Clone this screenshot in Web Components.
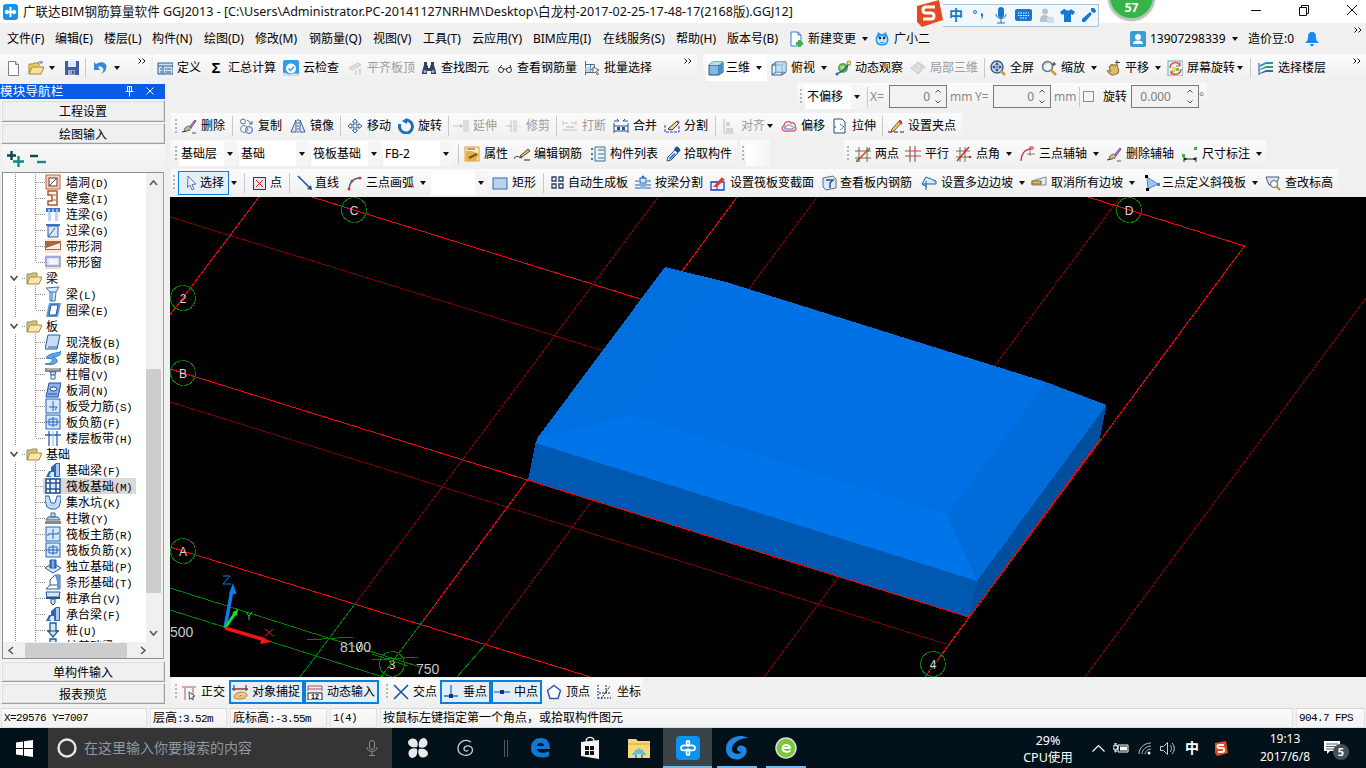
<!DOCTYPE html>
<html lang="zh">
<head>
<meta charset="utf-8">
<title>GGJ2013</title>
<style>
  html, body { margin: 0; padding: 0; background: #f0f0f0; overflow: hidden; }
  body { font: 12px/16px "Noto Sans", "Noto Sans CJK SC", sans-serif; color: #000; }
</style>
</head>
<body>
<gld-app>
  <gld-titlebar>广联达BIM钢筋算量软件 GGJ2013 - [C:\Users\Administrator.PC-20141127NRHM\Desktop\白龙村-2017-02-25-17-48-17(2168版).GGJ12]</gld-titlebar>

  <gld-row h="31" style="padding-left:7px">
    <gld-tool w="48">文件(F)</gld-tool><gld-tool w="49">编辑(E)</gld-tool><gld-tool w="48">楼层(L)</gld-tool><gld-tool w="52">构件(N)</gld-tool>
    <gld-tool w="51">绘图(D)</gld-tool><gld-tool w="54">修改(M)</gld-tool><gld-tool w="64">钢筋量(Q)</gld-tool><gld-tool w="50">视图(V)</gld-tool>
    <gld-tool w="49">工具(T)</gld-tool><gld-tool w="61">云应用(Y)</gld-tool><gld-tool w="70">BIM应用(I)</gld-tool><gld-tool w="73">在线服务(S)</gld-tool>
    <gld-tool w="51">帮助(H)</gld-tool><gld-tool w="61">版本号(B)</gld-tool>
    <gld-tool w="86" icon="change" arrow>新建变更</gld-tool>
    <gld-tool w="256" icon="robot">广小二</gld-tool>
    <gld-tool w="118" icon="user" arrow>13907298339</gld-tool>
    <gld-tool w="56">造价豆:0</gld-tool>
    <gld-tool w="50" icon="bell"></gld-tool>
    <gld-more></gld-more>
  </gld-row>

  <gld-row h="29">
    <gld-bar w="151" h="27" style="padding-left:5px;align-self:flex-start">
      <gld-tool w="23" icon="new"></gld-tool><gld-tool w="36" icon="open" arrow="5"></gld-tool><gld-tool w="21" icon="save"></gld-tool>
      <gld-sep r="7"></gld-sep><gld-tool w="40" icon="undo" arrow="5"></gld-tool><gld-more></gld-more>
    </gld-bar>
    <gld-bar w="544" h="27" style="padding-left:4px;margin-left:2px;align-self:flex-start">
      <gld-tool w="51" icon="define">定义</gld-tool><gld-tool w="75" icon="sigma">汇总计算</gld-tool><gld-tool w="64" icon="cloudcheck">云检查</gld-tool>
      <gld-tool w="74" icon="flush" off>平齐板顶</gld-tool><gld-tool w="76" icon="binoc">查找图元</gld-tool><gld-tool w="87" icon="glasses">查看钢筋量</gld-tool>
      <gld-tool icon="batch">批量选择</gld-tool><gld-more></gld-more>
    </gld-bar>
    <gld-bar w="663" h="27" style="padding-left:5px;margin-left:6px;align-self:flex-start">
      <gld-tool w="59" icon="cube" g="2" arrow style="background:#fff;box-shadow:-2px 0 #fff;margin-right:4px">三维</gld-tool>
      <gld-tool w="64" icon="glasscube" arrow>俯视</gld-tool><gld-tool w="75" icon="orbit">动态观察</gld-tool><gld-tool w="74" icon="part3d" off>局部三维</gld-tool>
      <gld-sep r="5"></gld-sep><gld-tool w="51" icon="fit">全屏</gld-tool><gld-tool w="64" icon="zoom" arrow>缩放</gld-tool><gld-tool w="62" icon="pan" arrow>平移</gld-tool>
      <gld-tool w="83" icon="screenrot" arrow="2">屏幕旋转</gld-tool><gld-sep r="7"></gld-sep><gld-tool icon="floors">选择楼层</gld-tool><gld-more></gld-more>
    </gld-bar>
  </gld-row>

  <gld-main>
    <gld-nav>
      <gld-tree-item icon="wallhole" key="D">墙洞</gld-tree-item>
      <gld-tree-item icon="niche" key="I">壁龛</gld-tree-item>
      <gld-tree-item icon="coupling" key="G">连梁</gld-tree-item>
      <gld-tree-item icon="lintel" key="G">过梁</gld-tree-item>
      <gld-tree-item icon="bandhole">带形洞</gld-tree-item>
      <gld-tree-item icon="bandwin" last>带形窗</gld-tree-item>
      <gld-tree-item group>梁</gld-tree-item>
      <gld-tree-item icon="beam" key="L">梁</gld-tree-item>
      <gld-tree-item icon="ring" key="E" last>圈梁</gld-tree-item>
      <gld-tree-item group>板</gld-tree-item>
      <gld-tree-item icon="slab" key="B">现浇板</gld-tree-item>
      <gld-tree-item icon="spiral" key="B">螺旋板</gld-tree-item>
      <gld-tree-item icon="capital" key="V">柱帽</gld-tree-item>
      <gld-tree-item icon="slabhole" key="N">板洞</gld-tree-item>
      <gld-tree-item icon="slabbar" key="S">板受力筋</gld-tree-item>
      <gld-tree-item icon="negbar" key="F">板负筋</gld-tree-item>
      <gld-tree-item icon="floorband" key="H" last>楼层板带</gld-tree-item>
      <gld-tree-item group>基础</gld-tree-item>
      <gld-tree-item icon="fbeam" key="F">基础梁</gld-tree-item>
      <gld-tree-item icon="raft" key="M" selected>筏板基础</gld-tree-item>
      <gld-tree-item icon="pit" key="K">集水坑</gld-tree-item>
      <gld-tree-item icon="pier" key="Y">柱墩</gld-tree-item>
      <gld-tree-item icon="mainbar" key="R">筏板主筋</gld-tree-item>
      <gld-tree-item icon="negbar" key="X">筏板负筋</gld-tree-item>
      <gld-tree-item icon="isolated" key="P">独立基础</gld-tree-item>
      <gld-tree-item icon="strip" key="T">条形基础</gld-tree-item>
      <gld-tree-item icon="pilecap" key="V">桩承台</gld-tree-item>
      <gld-tree-item icon="fbeam" key="F">承台梁</gld-tree-item>
      <gld-tree-item icon="pile" key="U">桩</gld-tree-item>
      <gld-tree-item icon="pile" key="T">桩基础梁</gld-tree-item>
    </gld-nav>

    <gld-workspace>
      <gld-row h="27" style="margin-bottom:3px">
        <gld-bar w="410" style="padding-left:3px;margin-left:627px">
          <gld-grip w="5"></gld-grip><gld-combo w="58">不偏移</gld-combo><gld-sep l="4" r="2"></gld-sep>
          <gld-tool w="19" muted>X=</gld-tool><gld-spin w="58">0</gld-spin><gld-tool w="28" muted>&nbsp;mm</gld-tool>
          <gld-tool w="18" muted>Y=</gld-tool><gld-spin w="58">0</gld-spin><gld-tool w="28" muted>&nbsp;mm</gld-tool>
          <gld-sep r="3"></gld-sep><gld-check></gld-check>
          <gld-tool w="28" style="margin-left:9px">旋转</gld-tool><gld-spin w="68" pad="27">0.000</gld-spin><gld-tool w="9" muted>°</gld-tool>
        </gld-bar>
      </gld-row>

      <gld-row h="26" style="margin-bottom:1px">
        <gld-bar w="791" style="padding-left:4px;margin-left:1px">
          <gld-grip w="6"></gld-grip>
          <gld-tool w="51" icon="brush">删除</gld-tool><gld-sep r="5"></gld-sep><gld-tool w="52" icon="copy">复制</gld-tool><gld-tool w="50" icon="mirror">镜像</gld-tool>
          <gld-sep r="6"></gld-sep><gld-tool w="51" icon="move">移动</gld-tool><gld-tool w="50" icon="rotate">旋转</gld-tool><gld-sep r="4"></gld-sep>
          <gld-tool w="53" icon="extend" off>延伸</gld-tool><gld-tool w="50" icon="trim" off>修剪</gld-tool><gld-sep r="5"></gld-sep>
          <gld-tool w="51" icon="breakline" off>打断</gld-tool><gld-tool w="51" icon="merge">合并</gld-tool><gld-tool w="51" icon="split">分割</gld-tool>
          <gld-sep r="5"></gld-sep><gld-tool w="60" icon="align" off arrow="2">对齐</gld-tool><gld-tool w="51" icon="offset">偏移</gld-tool><gld-tool w="50" icon="stretch">拉伸</gld-tool>
          <gld-sep r="5"></gld-sep><gld-tool icon="grips">设置夹点</gld-tool>
        </gld-bar>
      </gld-row>

      <gld-row h="27" style="margin-bottom:2px">
        <gld-bar w="566" style="padding-left:4px;margin-left:1px">
          <gld-grip w="4"></gld-grip><gld-combo w="57" style="margin-right:3px">基础层</gld-combo><gld-combo w="69" style="margin-right:3px">基础</gld-combo>
          <gld-combo w="69" style="margin-right:3px">筏板基础</gld-combo><gld-combo w="69">FB-2</gld-combo><gld-sep l="6" r="5"></gld-sep>
          <gld-tool w="50" icon="props">属性</gld-tool><gld-tool w="76" icon="editbar">编辑钢筋</gld-tool><gld-tool w="76" icon="list">构件列表</gld-tool><gld-tool icon="pick" g="2">拾取构件</gld-tool>
        </gld-bar>
        <gld-bar w="30" style="padding-left:2px;margin-left:3px"><gld-grip w="4"></gld-grip><gld-combo w="24" bare></gld-combo></gld-bar>
        <gld-bar w="422" style="padding-left:3px;margin-left:74px">
          <gld-grip w="8"></gld-grip>
          <gld-tool w="50" icon="twopt">两点</gld-tool><gld-tool w="51" icon="parallel">平行</gld-tool><gld-tool w="63" icon="angle" arrow>点角</gld-tool>
          <gld-tool w="87" icon="arcaxis" arrow>三点辅轴</gld-tool><gld-tool w="76" icon="brush">删除辅轴</gld-tool><gld-tool icon="dim" arrow>尺寸标注</gld-tool>
        </gld-bar>
      </gld-row>

      <gld-row h="27" style="margin-bottom:1px">
        <gld-bar w="1167" style="padding-left:2px;margin-left:1px">
          <gld-grip w="5"></gld-grip>
          <gld-tool w="51" icon="cursor" pad="6" g="0" on="thin">选择</gld-tool><gld-tool w="15" arrow="2"></gld-tool><gld-sep r="7"></gld-sep>
          <gld-tool w="37" icon="point" g="2">点</gld-tool><gld-sep r="7"></gld-sep><gld-tool w="50" icon="line" g="2">直线</gld-tool>
          <gld-tool w="84" icon="arc" g="3" arrow>三点画弧</gld-tool><gld-combo w="56" style="margin-right:5px"></gld-combo>
          <gld-tool w="51" icon="rect">矩形</gld-tool><gld-sep r="6"></gld-sep><gld-tool w="85" icon="autogen" g="2">自动生成板</gld-tool>
          <gld-tool w="75" icon="splitbeam">按梁分割</gld-tool><gld-tool w="111" icon="section">设置筏板变截面</gld-tool><gld-tool w="100" icon="viewbar" g="3">查看板内钢筋</gld-tool>
          <gld-tool w="110" icon="slope" arrow>设置多边边坡</gld-tool><gld-tool w="113" icon="noslope" arrow>取消所有边坡</gld-tool><gld-tool w="121" icon="tri" g="2" arrow>三点定义斜筏板</gld-tool><gld-tool icon="elev" g="4">查改标高</gld-tool>
        </gld-bar>
      </gld-row>

      <gld-canvas></gld-canvas>

      <gld-row h="30">
        <gld-bar w="208" h="27" style="padding-left:4px;margin-left:1px;align-self:flex-start;margin-top:1px">
          <gld-grip w="6"></gld-grip><gld-tool w="48" icon="ortho">正交</gld-tool>
          <gld-tool w="75" icon="snap" pad="3" on>对象捕捉</gld-tool><gld-tool w="75" icon="dyn" pad="3" on>动态输入</gld-tool>
        </gld-bar>
        <gld-bar w="261" h="27" style="padding-left:4px;margin-left:3px;align-self:flex-start;margin-top:1px">
          <gld-grip w="7"></gld-grip><gld-tool w="47" icon="cross">交点</gld-tool>
          <gld-tool w="51" icon="perp" pad="3" on>垂点</gld-tool><gld-tool w="51" icon="mid" pad="3" on>中点</gld-tool>
          <gld-tool w="54" icon="vertex" pad="4">顶点</gld-tool><gld-tool icon="coord" g="5">坐标</gld-tool>
        </gld-bar>
      </gld-row>
    </gld-workspace>
  </gld-main>

  <gld-statusbar>
    <gld-cell w="146" mono>X=29576 Y=7007</gld-cell>
    <gld-cell w="77" mono><b>层高</b>:3.52m</gld-cell>
    <gld-cell w="97" mono><b>底标高</b>:-3.55m</gld-cell>
    <gld-cell w="47" mono>1(4)</gld-cell>
    <gld-cell w="913">按鼠标左键指定第一个角点，或拾取构件图元</gld-cell>
    <gld-cell w="69" mono>904.7 FPS</gld-cell>
  </gld-statusbar>

  <gld-taskbar></gld-taskbar>
  <gld-sogou></gld-sogou>
  <gld-score>57</gld-score>
</gld-app>

<script>
const ICONS = {
  change: '<path d="M3 1h7l3 3v11H3z" fill="#fff" stroke="#2d7fd1"/><path d="M10 1v3h3" fill="none" stroke="#2d7fd1"/><path d="M10 9h3v2h2v3h-2v2h-3v-2H8v-3h2z" fill="#46b04a"/>',
  robot: '<path d="M3 4l1-3 3 2h2l3-2 1 3c2 3 2 6 0 9-2 2-8 2-10 0-2-3-2-6 0-9z" fill="#2e9be8"/><ellipse cx="8" cy="9" rx="5" ry="4" fill="#bfe6fb"/><circle cx="6" cy="7" r="1.2" fill="#123"/><circle cx="10" cy="7" r="1.2" fill="#123"/><path d="M6 11c1 1 3 1 4 0" stroke="#2e9be8" fill="none"/>',
  user: '<rect width="16" height="16" rx="2" fill="#3d9bd4"/><circle cx="8" cy="6" r="3" fill="#fff"/><path d="M3 13c0-3 3-3.500 5-3.500s5 .5 5 3.500z" fill="#fff"/>',
  bell: '<path d="M8 1c3 0 4 2 4 5 0 3 1 4 3 6H1c2-2 3-3 3-6 0-3 1-5 4-5z" fill="#1a8af0"/><path d="M6 13h4c0 3-4 3-4 0z" fill="#1a8af0"/>',
  new: '<path d="M3.500 1.500h7l3 3v11h-10z" fill="#fff" stroke="#7f7f7f"/><path d="M10.500 1.500v3h3" fill="#ddd" stroke="#7f7f7f"/>',
  open: '<path d="M1 14V4h4l1-1h5v3" fill="#eecb6a" stroke="#a8842c"/><path d="M1 14l3-7h12l-3 7z" fill="#f8e0a0" stroke="#a8842c"/><path d="M10 3c1-2 3-2 4 0M14 3l-2 0M14 3l0-2" stroke="#2c7ed6" fill="none"/>',
  save: '<path d="M1 1h14v14H1z" fill="#3c5ea6"/><path d="M4 1h8v6H4z" fill="#e2e9f6"/><path d="M4 10h7v5H4z" fill="#9aa9cc"/><path d="M8 11h2v3H8z" fill="#3c5ea6"/>',
  undo: '<path d="M5 3C10 1 15 4 13 9c-1 3-3 4-5 5 2-2 3-4 2-6-1-1-3-2-5-1l2 3H1V2l2 2z" fill="#3a86d8"/>',
  define: '<rect x="1" y="3" width="15" height="11" fill="#cfe2f5" stroke="#2a5c94"/><path d="M1 6h15M6 6v8M3 9h2M3 12h2M8 9h6M8 12h6" stroke="#2a5c94"/>',
  sigma: '<text x="8" y="13" font-family="Liberation Sans" font-weight="700" font-size="15" text-anchor="middle" fill="#000">Σ</text>',
  cloudcheck: '<rect width="16" height="16" rx="2" fill="#2f9ee6"/><circle cx="8" cy="8.500" r="5" fill="#fff"/><path d="M5.500 8.500l2 2 3.500-4" fill="none" stroke="#2f9ee6" stroke-width="1.500"/><path d="M0 13c3-1 5 2 8 1s5-1 8 0v2H0z" fill="#bfe3f9"/>',
  flush: '<path d="M2 8l9-5 3 2-9 5z" fill="#e1e1e1" stroke="#c8c8c8"/><path d="M2 9v6h6V11l6-3v7H2z" fill="#d4d4d4"/><path d="M6 12h2v3H6zM10 10h2v5h-2z" fill="#f3f3f3"/>',
  binoc: '<path d="M3 2h3v3l1 1v2h2V6l1-1V2h3v3l2 7v2H10v-3H6v3H1v-2l2-7z" fill="#33405c"/><circle cx="4" cy="11.500" r="1.500" fill="#9cb6dc"/><circle cx="12" cy="11.500" r="1.500" fill="#9cb6dc"/>',
  glasses: '<circle cx="4" cy="10" r="2.500" fill="#fff" stroke="#333"/><circle cx="12" cy="10" r="2.500" fill="#fff" stroke="#333"/><path d="M6 9h4M2 8l3-3M14 8l-1-3" stroke="#333" fill="none"/>',
  batch: '<path d="M1.500 1v14M1.500 4.500h9v5h-9M1.500 12.500h10M6.500 4.500v8" stroke="#456a8c" fill="none"/><path d="M1.500 7h5v5h-5z" fill="#b8d4ee"/><path d="M9 7l6 3-2.500 1 2 3-1 1-2-3L9 13z" fill="#fff" stroke="#666"/>',
  cube: '<path d="M1 5l4-3h10v10l-4 3H1z" fill="#7fb9e2" stroke="#234f74"/><path d="M1 5h10v10M11 5l4-3" fill="none" stroke="#234f74"/><path d="M1 5l4-3h10l-4 3z" fill="#b9def5"/><path d="M11 5l4-3v10l-4 3z" fill="#4a8fc6"/>',
  glasscube: '<path d="M1 5l4-3h10v10l-4 3H1z" fill="#e3f1fb" stroke="#2c5f89"/><path d="M1 5h10v10M11 5l4-3M1 15l4-3h10M5 2v10" fill="none" stroke="#2c5f89"/><path d="M5 2h10v10H5z" fill="#b6d6ef" fill-opacity=".7"/>',
  orbit: '<circle cx="8" cy="8" r="5" fill="#58ae44"/><path d="M5 6l4-1 1 3-4 3z" fill="#a8dd8a"/><path d="M1 14C5 13 11 9 15 2" stroke="#2c4fae" stroke-width="1.500" fill="none"/><circle cx="14" cy="3" r="2" fill="#f6e27a" stroke="#9a8a2a"/><circle cx="2" cy="14" r="1.500" fill="#3a63c8"/>',
  part3d: '<path d="M1 8l7-6 7 5-7 7z" fill="#e4e4e4" stroke="#c4c4c4"/><path d="M4 5l7 5M7 3l7 5M8 2L4 11M12 5l-4 8" stroke="#cfcfcf"/>',
  fit: '<circle cx="7" cy="7" r="6" fill="#cfe0f4" stroke="#3a5c8c" stroke-width="1.500"/><path d="M7 3v8M3 7h8M7 2.500l-1.500 2h3zM7 11.500l-1.500-2h3zM2.500 7l2-1.500v3zM11.500 7l-2-1.500v3z" fill="#24497e" stroke="#24497e" stroke-width=".6"/><path d="M11 11l4 4" stroke="#d19a31" stroke-width="2.500"/>',
  zoom: '<circle cx="6.500" cy="6.500" r="5" fill="#eef4fa" stroke="#5a7489" stroke-width="1.500"/><path d="M3.500 5c1-2 3-2 4-2" stroke="#aac" fill="none"/><path d="M10 10l5 5" stroke="#c89c30" stroke-width="2.500"/><path d="M13 2v4M11 4h4" stroke="#333"/>',
  pan: '<path d="M2 9c1-1 2 0 3 1V6c0-1 2-1 2 0v-1c0-1 2-1 2 0v1c0-1 2-1 2 0v1c0-1 2-1 2 0v4c0 3-2 4-5 4-3 0-4-1-6-6z" transform="rotate(-20 8 9)" fill="#dfbb6e" stroke="#8f6d26"/><path d="M12 0v5M10 2.500h5" stroke="#444"/>',
  screenrot: '<rect x="1" y="1" width="15" height="15" fill="#e8f3fb" stroke="#6ea6cf"/><path d="M3 8a5.500 5.500 0 0 1 10-3M14 9a5.500 5.500 0 0 1-10 3" stroke="#e04c36" stroke-width="1.500" fill="none"/><path d="M13 2v4h-4M4 15v-4h4" fill="none" stroke="#e04c36"/><path d="M5 7h4v4H5z" fill="#f4d94f"/><path d="M9 8h3v3H9z" fill="#77c35a"/>',
  floors: '<path d="M2 5l6-3h7v2H8L2 7z" fill="#2c8cc9"/><path d="M2 9l6-3h7v2H8l-6 2z" fill="#2f9e6b"/><path d="M2 13l6-3h7v2H8l-6 2z" fill="#2c6cb8"/><path d="M1 3v12" stroke="#1d4b74"/>',
  brush: '<path d="M1 14l8-2" stroke="#222"/><path d="M3 12c1-3 3-4 5-4l2 2c0 2-3 3-6 3z" fill="#d9b26a" stroke="#5577aa"/><path d="M9 8l5-6 1 1-5 7z" fill="#c87ad0" stroke="#7a4a9a"/><path d="M11 15h4" stroke="#555"/>',
  copy: '<circle cx="5" cy="3.500" r="2.500" fill="none" stroke="#5a6a7a"/><circle cx="11" cy="12" r="3.500" fill="#d8eaf8" stroke="#3a6ea5"/><path d="M9 2l5 4M14 3v3h-3" fill="none" stroke="#3a6ea5"/><circle cx="6" cy="11" r="3.500" fill="none" stroke="#7a8a9a"/>',
  mirror: '<path d="M6 2L1 14h5z" fill="#dbe9f6" stroke="#34608e"/><path d="M10 2l5 12h-5z" fill="#dbe9f6" stroke="#34608e"/><path d="M8 1v14" stroke="#34608e" stroke-dasharray="2 1"/>',
  move: '<path d="M8 1l2.500 3H9v3h3V5.500L15 8l-3 2.500V9H9v3h1.500L8 15l-2.500-3H7V9H4v1.500L1 8l3-2.500V7h3V4H5.500z" fill="#fff" stroke="#2a5a96"/>',
  rotate: '<path d="M8 2a6.500 6.500 0 1 1-6 4" fill="none" stroke="#1f6fc2" stroke-width="3"/><path d="M9 0v6L4 3z" fill="#1f6fc2"/>',
  extend: '<path d="M0 8h9M13 2v12M15 2v12M11 2v12" stroke="#c4c4c4"/><path d="M7 5.500L10 8l-3 2.500z" fill="#c4c4c4"/>',
  trim: '<path d="M5 2v12M8 2v12M10 2v12M0 8h6" stroke="#c4c4c4"/><path d="M10 8h5" stroke="#dcdcdc"/>',
  breakline: '<path d="M1 5h5M9 5h5M1 12h14M1 3v4M14 3v4" stroke="#c4c4c4"/><path d="M4 8h8v2H4z" fill="#d6d6d6"/>',
  merge: '<path d="M1 8h14M1 13h14M1 5v10M15 5v10" stroke="#27508c"/><path d="M1 3h5M6 3L4 1M15 3h-5M10 3l2-2" stroke="#27508c"/><rect x="4" y="9" width="3" height="3" fill="#27508c"/><rect x="9" y="9" width="3" height="3" fill="#27508c"/>',
  split: '<path d="M1 7v7h14V7" stroke="#1144d0" stroke-dasharray="3 1" fill="none"/><path d="M4 11L13 3l2 2-7 7z" fill="#f4d9a0" stroke="#333"/><path d="M13 3l2 2" stroke="#c33" stroke-width="2"/>',
  align: '<path d="M3 1v14M3 15h10" stroke="#c0c0c0"/><path d="M5 4h4v4H5zM5 10h7v4H5z" fill="#d4d4d4"/>',
  offset: '<path d="M4 13C1 13 0 9 3 8 3 4 8 2 10 5c3-1 5 2 4 4 2 2 0 4-2 4z" fill="#fff" stroke="#e06060" stroke-width="1.500"/><path d="M4 11C3 10 3 9 5 9c0-2 4-3 5-1 2 0 3 1 2 3z" fill="#fff" stroke="#2f76bd"/>',
  stretch: '<path d="M2 1h8l3 3v11H2z" fill="#fff" stroke="#2a4a7c"/><path d="M8 6l4 3-4 3M2 9h3" stroke="#2a4a7c" fill="none" stroke-dasharray="2 1"/>',
  grips: '<path d="M0 14h4M6 14h4M12 14h4" stroke="#222"/><path d="M4 11l8-9 2 2-8 9-3 1z" fill="#f0c870" stroke="#7a5a20"/><path d="M11 3l3 3" stroke="#d04040" stroke-width="2"/>',
  props: '<rect x="1" y="1" width="14" height="14" fill="#fbeec2" stroke="#e09a38"/><path d="M2 5h6l7 3-3 7H2z" fill="#e2b14e"/><path d="M5 12l8-4" stroke="#7a5212" stroke-width="2"/><path d="M3 3h8" stroke="#7a5212"/>',
  editbar: '<path d="M0 13c1-3 4-3 5-2l3 1" stroke="#222" fill="none"/><path d="M6 10l8-7 2 2-8 6z" fill="#e2bd7a" stroke="#5a4a22"/><path d="M10 14h6" stroke="#222"/>',
  list: '<path d="M5 1h10v14H5z" fill="#eaf3fb" stroke="#3f6e96"/><path d="M8 4h6M8 8h6M8 12h6" stroke="#3f6e96"/><path d="M1 2h2v2H1zM1 7h2v2H1zM1 12h2v2H1z" fill="#5a7188"/>',
  pick: '<path d="M1 15l1-4 7-7 3 3-7 7z" fill="#e8f4fb" stroke="#2a5590"/><path d="M3 12l5-5 2 1-6 6z" fill="#2f83d2"/><path d="M8 3l2-2c1-1 2 0 3 1s2 2 1 3l-2 2z" fill="#1d4e8f"/>',
  twopt: '<path d="M4 1v15M12 1v15M0 5h16M0 12h16" stroke="#7a6a4a"/><path d="M1 16L15 2" stroke="#e02828" stroke-width="1.300"/><circle cx="3" cy="14" r="1.500" fill="#34a23c"/><circle cx="13" cy="4" r="1.500" fill="#34a23c"/>',
  parallel: '<path d="M5 0v16M10 0v16" stroke="#555"/><path d="M0 5h16M0 10h16" stroke="#d83a3a"/>',
  angle: '<path d="M4 1v15M9 1v15M0 5h14M0 11h14" stroke="#7a6a4a"/><path d="M1 15L13 1" stroke="#d81e1e" stroke-width="1.300"/><circle cx="14" cy="11" r="1.200" fill="#d81e1e"/>',
  arcaxis: '<path d="M2 15C2 8 6 3 12 3" fill="none" stroke="#d83a3a" stroke-width="1.300"/><path d="M8 8h8M11 0v10" stroke="#555" stroke-opacity=".7"/><circle cx="13" cy="2" r="1.300" fill="none" stroke="#d83a3a"/>',
  dim: '<path d="M2 11v5M14 11v5M2 13h12M2 13l2-1v2zM14 13l-2-1v2z" stroke="#222" fill="#222"/><rect x="0" y="8" width="3" height="3" fill="#45b04a"/><rect x="12" y="1" width="3" height="3" fill="#45b04a"/>',
  cursor: '<path d="M4 1l8 8-4 .5L10 14l-2 1-2-5-2.500 2.500z" fill="#eef3fa" stroke="#5577aa"/>',
  point: '<rect x="1.500" y="2.500" width="12" height="12" fill="#dfe9f6" stroke="#223c80"/><path d="M4 5l7 7M11 5l-7 7" stroke="#c8222c"/>',
  line: '<path d="M1 1l12 12" stroke="#1f4e8c" stroke-width="1.500"/><path d="M15 15l-5-1 4-4z" fill="#1f4e8c"/>',
  arc: '<path d="M2 15C2 8 6 3 13 3" fill="none" stroke="#2a5a9a" stroke-width="1.300"/><circle cx="2" cy="14" r="1.500" fill="#d83a3a"/><circle cx="5" cy="6" r="1.500" fill="#d83a3a"/><circle cx="13" cy="3" r="1.500" fill="#d83a3a"/>',
  rect: '<rect x="1" y="3" width="14" height="11" fill="#b8d2f0" stroke="#3a6ab4"/>',
  autogen: '<path d="M2 2h4v4H2zM9 2h4v4H9zM2 9h4v4H2zM9 9h4v4H9z" fill="#eef4fb" stroke="#2a3f6a" stroke-width="1.300"/>',
  splitbeam: '<path d="M0 6h4M12 6h4M0 10h16M0 13h16" stroke="#2060b8"/><rect x="5" y="3" width="6" height="5" fill="#d6e8f9" stroke="#2060b8"/><circle cx="8" cy="2" r="1.500" fill="#2a6cd0"/><path d="M5 11h6v3H5z" fill="#8fb8e8"/>',
  section: '<path d="M1 7h13v8H1z" fill="none" stroke="#1240c4" stroke-width="1.300"/><path d="M7 7v8" stroke="#1240c4"/><path d="M3 12L12 2l3 2-8 8z" fill="#e23a2c"/><path d="M12 2l3 2" stroke="#fff"/>',
  viewbar: '<path d="M2 3l10-2 3 3v9l-10 2-3-3z" fill="#dce9f6" stroke="#55708a"/><path d="M5 5h7l-3 3v5" stroke="#245a92" stroke-width="1.500" fill="none"/>',
  slope: '<path d="M5 15V6M1 9h14M1 9l4-7 10 4v3" fill="#d8e9f8" stroke="#1d5fb0"/><path d="M9 3l5 4" stroke="#85abd4"/><path d="M6 12L1 9" stroke="#1d5fb0"/>',
  noslope: '<path d="M4 5l11-3v8H1V7z" fill="#e8eef6" stroke="#6f8aa8"/><rect x="1" y="6" width="9" height="3" fill="#f1c640" stroke="#7a6216"/>',
  tri: '<path d="M3 2l11 7-10 5z" fill="#9cc6ee" stroke="#4a84c4"/><rect x="1" y="0" width="3" height="3"/><rect x="2" y="13" width="3" height="3"/><rect x="13" y="8" width="3" height="3" fill="#4a84c4"/>',
  elev: '<path d="M1 2h13l-3 8H4z" fill="#dde4ea" stroke="#4a5d70"/><circle cx="9" cy="9" r="3.500" fill="#fff" stroke="#55616e"/><path d="M11.500 11.500l3.500 3.500" stroke="#bb8f2a" stroke-width="2"/>',
  ortho: '<path d="M1 3h14M4 3v13M12 3v13" stroke="#d9a6a6" stroke-width="2"/><path d="M8 8l6 4-2.500 1 1 2-1 1-1-2-2 1.500z" fill="#e8eef6" stroke="#555"/>',
  snap: '<path d="M2 1v6M14 1v6M0 5h16" stroke="#8a3c36" stroke-width="1.300"/><path d="M2 13c0-3 4-5 7-5s6 1 6 3-2 4-6 4-7 0-7-2z" fill="#e4c27a" stroke="#b58a30"/><path d="M5 13c2-2 4-3 7-3" stroke="#fff"/>',
  dyn: '<path d="M1 2h14M1 5h14M1 2v5M15 2v5" stroke="#a55"/><rect x="1" y="9" width="14" height="7" fill="#fff" stroke="#222"/><text x="8" y="15" font-family="Liberation Mono" font-size="6.500" font-weight="700" text-anchor="middle" fill="#000">12</text>',
  cross: '<path d="M1 1l14 14M15 1L1 15" stroke="#1a52a8" stroke-width="1.600"/>',
  perp: '<path d="M1 12h14M8 1v13" stroke="#2a6cc4" stroke-width="1.300"/><rect x="6" y="10" width="4" height="4" fill="#12377e"/>',
  mid: '<path d="M0 8h16" stroke="#2a6cc4" stroke-width="1.300"/><rect x="6" y="6" width="4" height="4" fill="#12377e"/>',
  vertex: '<path d="M8 1.500l6.500 5-2.500 8H4L1.500 6.500z" fill="#fff" stroke="#2a5ea8" stroke-width="1.500"/>',
  coord: '<path d="M2 1v14M2 14h13" stroke="#1f5da8" stroke-dasharray="1.500 1.500" stroke-width="1.500"/><path d="M10 1v8M3 9h11M5 15l9-13" stroke="#222" stroke-dasharray="2 1"/>',
  wallhole: '<rect x="1" y="1" width="14" height="14" fill="#f7d4bf" stroke="#c9633b"/><rect x="4" y="4" width="8" height="8" fill="#fff" stroke="#444"/><path d="M4 12l8-8" stroke="#6a3a1a"/>',
  niche: '<path d="M3 1h9v14H3v-4h4V5H3z" fill="#fff" stroke="#b4551e" stroke-width="1.500"/><path d="M8 5h3M8 10h3" stroke="#b4551e"/>',
  coupling: '<rect x="1" y="2" width="14" height="4" fill="#3c76c8"/><rect x="3" y="6" width="3" height="9" fill="#bad4f2"/><rect x="10" y="6" width="3" height="9" fill="#bad4f2"/><path d="M4 3v3M8 3v3M12 3v3" stroke="#fff"/>',
  lintel: '<path d="M1 2h14v2H1z" fill="#3c76c8"/><path d="M3 4h10v11H3z" fill="#d7e7f8" stroke="#2a5aa8"/><path d="M3 15l7-9" stroke="#2a5aa8"/>',
  bandhole: '<rect y="1" width="16" height="14" fill="#f7e5da"/><rect y="3" width="16" height="9" fill="#a8663a"/><path d="M1 10l14-5v6H1z" fill="#f6ede6"/>',
  bandwin: '<rect y="1" width="16" height="14" fill="#f8d9cc"/><rect x="1" y="3" width="14" height="9" fill="#d9e5fb" stroke="#5c78c8"/><rect x="4" y="5" width="8" height="5" fill="#f4f7fe"/>',
  beam: '<path d="M1 2l13-1-3 5-1 9H5V6z" fill="#d7e9fa" stroke="#2a78c2"/><path d="M5 6h6M7 6v9" stroke="#2a78c2"/>',
  ring: '<path d="M4 1h12l-3 14H1z" fill="#6296d9"/><path d="M6 3h7l-2 10H4z" fill="#fff" stroke="#1f4fa8"/>',
  slab: '<path d="M3 1h12l-3 14H0z" fill="#c8ddf6" stroke="#2458ae"/><path d="M3 13h9" stroke="#2458ae"/>',
  spiral: '<path d="M1 8C4 2 14 4 16 1c1 4-4 6-8 6 3 1 5 3 4 5-3 3-8 3-12 2 4 0 9-2 7-5-2-1-4 0-6-1z" fill="#5aa8ea" stroke="#2f7cc6"/>',
  capital: '<rect x="0" y="2" width="16" height="4" fill="#8a8a8a"/><path d="M2 3h12" stroke="#d8d8d8"/><path d="M5 6h6l-1 3H6z" fill="#e8f0f8" stroke="#2b63ac"/><path d="M6 9h4v4H6z" fill="#fff" stroke="#2b63ac"/>',
  slabhole: '<path d="M4 1h12l-3 14H1z" fill="#8cb4e6" stroke="#1c4ca0"/><ellipse cx="8.500" cy="7" rx="3.500" ry="2" fill="#fff" stroke="#1c4ca0"/><path d="M3 12h9" stroke="#1c4ca0"/>',
  slabbar: '<rect x="1" y="1" width="14" height="14" fill="#d6e7f9" stroke="#2464b8"/><path d="M8 3v10" stroke="#2464b8"/><path d="M4 9h8l-2 3" fill="none" stroke="#2464b8"/>',
  negbar: '<rect x="1" y="1" width="14" height="14" fill="#d6e7f9" stroke="#2464b8"/><path d="M1 8h14M8 3v10M4 5h8v6H4z" fill="none" stroke="#2464b8"/>',
  floorband: '<path d="M4 1v15M12 1v15M0 5h16" stroke="#2464b8" stroke-width="1.300"/><path d="M8 1v15" stroke="#8ab0de"/>',
  fbeam: '<path d="M1 15l3-6h2V5l5-4h4v14H9v-5H6v5z" fill="#2e66b4"/><path d="M11 2h3v12h-3z" fill="#a8c8ec"/><path d="M4 14l2-4h3v4z" fill="#dbeafa"/>',
  raft: '<rect x="1" y="1" width="14" height="14" fill="#fff" stroke="#1f5098" stroke-width="1.500"/><path d="M1 5h14M1 11h14M5 1v14M11 1v14" stroke="#1f5098" stroke-width="1.500"/><rect x="6" y="6" width="4" height="4" fill="#cfe0f4"/>',
  pit: '<path d="M0 2h4l2 7h4l2-7h4v4l-2 7-4 2H6l-4-2-2-7z" fill="#c9dff6" stroke="#2463b0"/><path d="M4 11h8" stroke="#8cb0d8" stroke-dasharray="1 1"/>',
  pier: '<path d="M6 3h4v4H6z" fill="#d3e2f2" stroke="#395f90"/><path d="M3 7h10l2 3H1z" fill="#c2d3e6" stroke="#395f90"/><rect y="11" width="16" height="3" fill="#8a8a8a"/>',
  mainbar: '<rect x="1" y="1" width="14" height="14" fill="#d6e7f9" stroke="#2464b8"/><path d="M3 8h10M8 3v10M3 8v2M13 8V6" stroke="#2464b8" fill="none"/>',
  isolated: '<path d="M0 10l8-5 8 5-8 5z" fill="#d4e6f8" stroke="#2a5ea8"/><path d="M5 2h6v8H5z" fill="#3f79c8" stroke="#24508c"/><path d="M8 2v8" stroke="#bcd6f2"/>',
  strip: '<path d="M1 15l4-4V6l5-5h5v14z" fill="#fff" stroke="#2a5ea8"/><path d="M10 1h5v14h-3V8z" fill="#5f96d6"/><path d="M5 11h7" stroke="#2a5ea8"/>',
  pilecap: '<path d="M1 2h14l-1 5H2z" fill="#d5e6f6" stroke="#24568e"/><rect x="1" y="7" width="14" height="2" fill="#24568e"/><path d="M6 9h4v4l-2 2-2-2z" fill="#cfe0f2" stroke="#24568e"/>',
  pile: '<path d="M5 1h6v8h2l-5 6-5-6h2z" fill="#d5e6f6" stroke="#24568e" stroke-width="1.300"/><path d="M2 9h12" stroke="#24568e"/>'
};

function iconSvg(name, size) {
  const s = size || 16;
  return `<svg width="${s}" height="${s}" viewBox="0 0 16 16" style="display:block;flex:none">${ICONS[name] || ""}</svg>`;
}

function define(tag, render) {
  customElements.define(tag, class extends HTMLElement {
    constructor() {
      super();
      this.attachShadow({ mode: "open" });
    }
    connectedCallback() {
      if (this.shadowRoot.innerHTML) return;
      if (this.hasAttribute("w")) {
        this.style.width = this.getAttribute("w") + "px";
        this.style.flex = "none";
      }
      this.shadowRoot.innerHTML = render(this);
    }
  });
}

define("gld-app", () => `
  <style>
    :host { display: flex; flex-direction: column; position: relative; width: 1366px; height: 768px; overflow: hidden; background: #f0f0f0; }
  </style><slot></slot>`);

define("gld-titlebar", () => `
  <style>
    :host { display: flex; align-items: center; height: 23px; flex: none; background: #fff; padding-left: 3px; }
    svg.app { flex: none; margin-right: 5px; }
    .t { font-size: 12.55px; white-space: nowrap; color: #111; }
    .win { margin-left: auto; display: flex; }
    .win svg { display: block; }
  </style>
  <svg class="app" width="15" height="16" viewBox="0 0 15 16"><rect width="15" height="16" rx="3" fill="#1392ee"/><path d="M7.500 3v10M3 8h9" stroke="#fff" stroke-width="2"/><circle cx="4" cy="8" r="1.800" fill="none" stroke="#fff"/><circle cx="11" cy="8" r="1.800" fill="none" stroke="#fff"/></svg>
  <span class="t"><slot></slot></span>
  <span class="win">
    <svg width="118" height="23" viewBox="0 0 118 23" fill="none" stroke="#111"><path d="M3 10.500h10M51.500 7.500h7v8h-7zM53.500 7.500v-2h7v8h-2M99 5l10 10M109 5L99 15"/></svg>
  </span>`);

define("gld-row", (el) => `
  <style>:host { display: flex; align-items: stretch; flex: none; height: ${el.getAttribute("h")}px; }</style><slot></slot>`);

define("gld-bar", (el) => `
  <style>
    :host { display: flex; align-items: center; box-sizing: border-box; flex: none; height: ${el.getAttribute("h") || 27}px; align-self: center;
      background: linear-gradient(#fbfbfb, #f6f6f6 45%, #efefef); border-radius: 2px; }
  </style><slot></slot>`);

define("gld-tool", (el) => {
  const icon = el.getAttribute("icon");
  const gap = el.getAttribute("g") || 4;
  const pad = el.getAttribute("pad") || 0;
  const arrow = el.getAttribute("arrow");
  const on = el.getAttribute("on");
  const off = el.hasAttribute("off");
  const muted = el.hasAttribute("muted");
  const hasText = el.textContent.trim() !== "";
  const ring = on === "thin" ? "1px" : "2px";
  return `
  <style>
    :host { display: inline-flex; align-items: center; box-sizing: border-box; flex: none; white-space: nowrap; font-size: 12px; line-height: 16px;
      height: ${on !== null ? "24px" : "100%"}; padding-left: ${pad}px; color: ${off ? "#9b9b9b" : muted ? "#8a8a8a" : "#000"};
      ${on !== null ? `background: #e3eef9; box-shadow: inset 0 0 0 ${ring} #0a80dd;` : ""} }
    .lbl { ${icon && hasText ? `margin-left: ${gap}px;` : ""} }
    .arr { width: 0; height: 0; flex: none; border: 3.5px solid transparent; border-top: 4px solid #111; border-bottom: 0; margin-left: ${arrow === "" || arrow === null ? 6 : arrow}px; }
  </style>
  ${icon ? iconSvg(icon) : ""}<span class="lbl"><slot></slot></span>${arrow !== null ? '<span class="arr"></span>' : ""}`;
});

define("gld-more", () => `
  <style>
    :host { display: block; margin-left: auto; align-self: flex-start; margin-top: 4px; margin-right: 4px; height: 6px; flex: none; }
    svg { display: block; }
  </style>
  <svg width="9" height="6" viewBox="0 0 9 6" fill="none" stroke="#111"><path d="M.5 .5L3 3 .5 5.500M4.500 .5L7 3 4.500 5.500"/></svg>`);

define("gld-sep", (el) => `
  <style>
    :host { display: block; flex: none; width: 1px; height: 20px; background: #c9c9c9; margin-left: ${el.getAttribute("l") || 0}px; margin-right: ${el.getAttribute("r") || 0}px; }
  </style>`);

define("gld-grip", () => `
  <style>
    :host { display: block; flex: none; height: 15px; background: repeating-linear-gradient(#b4b4b4 0 2px, transparent 2px 4px) 0 0 / 2px 100% no-repeat; }
  </style>`);

define("gld-combo", (el) => `
  <style>
    :host { display: flex; align-items: center; justify-content: space-between; box-sizing: border-box; flex: none; height: 24px; background: ${el.hasAttribute("bare") ? "linear-gradient(90deg, #fff, #f4f4f4)" : "#fff"}; padding-left: 2px; white-space: nowrap; }
    .drop { display: flex; align-items: center; justify-content: center; width: 12px; height: 100%; background: #f5f5f5; }
    .arr { width: 0; height: 0; border: 3.5px solid transparent; border-top: 4px solid #111; border-bottom: 0; }
  </style>
  <span><slot></slot></span>${el.hasAttribute("bare") ? "" : '<span class="drop"><span class="arr"></span></span>'}`);

define("gld-spin", (el) => `
  <style>
    :host { display: flex; align-items: center; justify-content: flex-end; box-sizing: border-box; flex: none; height: 23px; border: 1px solid #7a7a7a; background: #f2f2f2; color: #7d7d7d; padding-right: ${el.getAttribute("pad") || 16}px; font-size: 12px; position: relative; }
    svg { position: absolute; right: 1px; top: 1px; }
  </style>
  <slot></slot>
  <svg width="14" height="19" viewBox="0 0 14 19" fill="none" stroke="#555"><path d="M4.500 5.500L7 3l2.500 2.500M4.500 13.500L7 16l2.500-2.500"/></svg>`);

define("gld-check", () => `
  <style>:host { display: block; flex: none; box-sizing: border-box; width: 11px; height: 11px; border: 1px solid #8a8a8a; background: #f4f4f4; }</style>`);

define("gld-main", () => `
  <style>:host { display: flex; height: 624px; flex: none; }</style><slot></slot>`);

define("gld-workspace", () => `
  <style>:host { display: flex; flex-direction: column; flex: none; width: 1196px; margin-left: 5px; }</style><slot></slot>`);

define("gld-nav", () => `
  <style>
    :host { display: flex; flex-direction: column; flex: none; width: 165px; padding-top: 1px; box-sizing: border-box; }
    .title { display: flex; align-items: center; height: 15px; background: #0a5ce6; color: #fff; font-size: 12.500px; letter-spacing: .2px; }
    .title svg { margin-left: auto; }
    .btn { box-sizing: border-box; margin-left: 1px; height: 22px; flex: none; text-align: center; line-height: 22px; background: #f0f0f0; border: 1px solid; border-color: #f8f8f8 #9f9f9f #9f9f9f #f8f8f8; box-shadow: 0 0 0 1px #dcdcdc inset; margin-bottom: 1px; }
    .btn.low { height: 21px; line-height: 21px; }
    .tools { display: flex; align-items: center; height: 27px; flex: none; gap: 6px; margin-left: 2px; padding-left: 5px; background: linear-gradient(#f8f8f8, #f0f0f0); }
    .frame { display: flex; flex-direction: column; height: 487px; flex: none; box-sizing: border-box; margin: 0 1px 2px 2px; border: 1px solid #8a9096; border-right-color: #a0a0a0; background: #f0f0f0; }
    .top { display: flex; flex: none; height: 469px; }
    .view { flex: none; width: 143px; overflow: hidden; background: #fff; padding-top: 1px; box-sizing: border-box; }
    .vs { display: flex; flex-direction: column; flex: none; width: 17px; background: #f0f0f0; }
    .vs .sp { height: 177px; flex: none; }
    .vs .th { height: 224px; flex: none; width: 15px; background: #cdcdcd; }
    .ar { display: block; flex: none; }
    .hs { display: flex; align-items: center; height: 15px; flex: none; margin-top: 1px; }
    .hs .th { width: 102px; height: 15px; background: #cdcdcd; margin: 0 8px 0 9px; }
    .hs .ar { margin-left: 3px; }
  </style>
  <div class="title">模块导航栏
    <svg width="46" height="15" viewBox="0 0 46 15" fill="none" stroke="#fff"><path d="M8.500 2.500h4v5h-4zM6.500 7.500h8M10.500 7.500v5M10.500 2.500v5" /><path d="M27.500 3.500l7 7M34.500 3.500l-7 7"/></svg>
  </div>
  <div class="btn" style="margin-top:1px">工程设置</div>
  <div class="btn low">绘图输入</div>
  <div class="tools">
    <svg width="17" height="16" viewBox="0 0 17 16" style="display:block"><path d="M4.500 0v9M0 4.500h9" stroke="#0b4a4a" stroke-width="2.400"/><path d="M11.500 5v11M6 10.500h11" stroke="#0a8a8a" stroke-width="2.400"/></svg>
    <svg width="16" height="16" viewBox="0 0 16 16" style="display:block"><path d="M0 5h8" stroke="#0b4a4a" stroke-width="2.400"/><path d="M7 11h9" stroke="#0a8a8a" stroke-width="2.400"/></svg>
  </div>
  <div class="frame">
    <div class="top">
      <div class="view"><slot></slot></div>
      <div class="vs">
        <svg class="ar" width="15" height="19" viewBox="0 0 15 19" fill="none" stroke="#555" stroke-width="1.500"><path d="M4 12l3.500-4 3.500 4"/></svg>
        <div class="sp"></div><div class="th"></div><div style="flex:1"></div>
        <svg class="ar" width="15" height="19" viewBox="0 0 15 19" fill="none" stroke="#555" stroke-width="1.500"><path d="M4 8l3.500 4 3.500-4"/></svg>
      </div>
    </div>
    <div class="hs">
      <svg class="ar" width="10" height="15" viewBox="0 0 10 15" fill="none" stroke="#555" stroke-width="1.500"><path d="M7 4L3 7.500 7 11"/></svg>
      <div class="th"></div>
      <svg class="ar" width="10" height="15" viewBox="0 0 10 15" fill="none" stroke="#555" stroke-width="1.500"><path d="M3 4l4 3.500L3 11"/></svg>
    </div>
  </div>
  <div class="btn low">单构件输入</div>
  <div class="btn low">报表预览</div>`);

define("gld-tree-item", (el) => {
  const group = el.hasAttribute("group");
  const last = el.hasAttribute("last");
  const key = el.getAttribute("key");
  const dots = "repeating-linear-gradient(#8a8a8a 0 1px, transparent 1px 2px)";
  const dotsH = "repeating-linear-gradient(90deg, #8a8a8a 0 1px, transparent 1px 2px)";
  const lines = group
    ? `${dotsH} 19px 8px / 4px 1px no-repeat`
    : `${dots} 12px 0 / 1px 100% no-repeat, ${dots} 32px 0 / 1px ${last ? "8px" : "100%"} no-repeat, ${dotsH} 33px 8px / 9px 1px no-repeat`;
  return `
  <style>
    :host { display: flex; align-items: center; height: 16px; flex: none; white-space: nowrap; font-size: 12px; background: ${lines}; }
    .chev { flex: none; display: block; margin-left: 7px; margin-right: 8px; }
    .row { display: flex; align-items: center; height: 16px; margin-left: 40px; padding: 0 4px 0 2px; ${el.hasAttribute("selected") ? "background:#d9d9d9;" : ""} }
    .g { display: flex; align-items: center; }
    .t { margin-left: 5px; margin-top: 2px; }
    .key { font: 11px/16px "Liberation Mono", monospace; letter-spacing: -.6px; }
  </style>
  ${group ? `<span class="g">
      <svg class="chev" width="8" height="16" viewBox="0 0 8 16" fill="none" stroke="#444" stroke-width="1.500"><path d="M.5 6l3.500 4 3.500-4"/></svg>
      <svg width="16" height="14" viewBox="0 0 16 14" style="display:block;flex:none"><path d="M1 13V3h4l1-1h5v3" fill="#e2c36a" stroke="#8f8a6e"/><path d="M1 13l3-7h12l-3 7z" fill="#fbe6a5" stroke="#9a8a52"/></svg>
      <span style="margin-left:4px;margin-top:2px"><slot></slot></span></span>`
    : `<span class="row">${iconSvg(el.getAttribute("icon"))}<span class="t"><slot></slot>${key ? `<span class="key">(${key})</span>` : ""}</span></span>`}`;
});

define("gld-statusbar", () => `
  <style>:host { display: flex; flex: none; height: 20px; gap: 3px; padding-left: 1px; margin-top: 1px; }</style><slot></slot>`);

define("gld-cell", (el) => `
  <style>
    :host { display: flex; align-items: center; box-sizing: border-box; flex: none; height: 20px; padding-left: 2px; white-space: nowrap;
      background: linear-gradient(#fbfbfb, #f2f2f2); border-top: 1px solid #d6d6d6; border-left: 1px solid #e4e4e4; border-right: 1px solid #e0e0e0; border-bottom: 1px solid #e0e0e0;
      ${el.hasAttribute("mono") ? 'font-family: "Liberation Mono", "Noto Sans CJK SC", monospace; font-size: 11px; letter-spacing: -.6px;' : "font-size: 12px;"} }
    ::slotted(b) { font: 12px/16px "Noto Sans CJK SC", sans-serif; letter-spacing: 0; }
  </style><span><slot></slot></span>`);

define("gld-canvas", () => {
  const bright = "#ff0000", dark = "#7c0000", green = "#008000";
  const seg = (c, p, w) => `<polyline points="${p}" fill="none" stroke="${c}" stroke-width="${w || 1}"/>`;
  const bubble = (x, y, t) => `<circle cx="${x}" cy="${y}" r="12.500" fill="none" stroke="#087a08" stroke-dasharray="9 .5"/><text x="${x}" y="${y + 4.500}" font-size="12" fill="#d8d8d8" text-anchor="middle" font-family="Liberation Sans">${t}</text>`;
  return `
  <style>
    :host { display: block; flex: none; width: 1196px; height: 480px; background: #000; }
    svg { display: block; }
  </style>
  <svg width="1196" height="480" viewBox="170 197 1196 480" shape-rendering="crispEdges">
    ${seg(dark, "170,217 960,461")}
    ${seg(bright, "312,197 1097,441")}
    ${seg(dark, "170,402 946,644")}
    ${seg(bright, "259,197 170,315")}
    ${seg(bright, "170,547 600,680")}
    ${seg(dark, "658,197 355,604")}
    ${seg(bright, "737,197 420,625")}
    ${seg(dark, "817,197 485,645")}
    ${seg(dark, "1120,197 762,680")}
    ${seg(dark, "1366,298 1085,677")}
    ${seg(green, "355,604 300,677")}
    ${seg(green, "420,625 380,678")}
    ${seg(green, "485,645 457,677")}
    ${seg(green, "170,588 420,667")}
    ${seg(green, "170,610 383,677")}
    ${seg(bright, "1088,197 1244.500,246 925,677")}

    <polygon points="665,267 726,282 1046,382 1106.500,405 977,581 535.500,443 538,437" fill="#0072e6"/>
    <polygon points="665,267 721,284 633,415 538,437" fill="#006fe0"/>
    <polygon points="721,284 1046,382 947,515 633,415" fill="#0071e5"/>
    <polygon points="538,437 633,415 947,515 977,581 535.500,443" fill="#0075ea"/>
    <polygon points="1046,382 1106.500,405 977,581 947,515" fill="#006cda"/>
    <polygon points="1106.500,405 1099.600,440 968.500,617 977,581" fill="#004f9e"/>
    <polygon points="535.500,443 977,581 968.500,617 528,480" fill="#0058b0"/>

    ${seg(bright, "170,369 968.500,617")}
    ${seg(bright, "1099.600,440 925,677")}

    ${bubble(354, 210, "C")}${bubble(1129, 210, "D")}${bubble(183, 298, "2")}${bubble(183, 373, "B")}${bubble(183, 551, "A")}${bubble(933, 664, "4")}${bubble(392, 664, "3")}

    <g font-family="Liberation Sans" font-size="14" fill="#c8c8c8">
      <text x="170" y="637">500</text><text x="340" y="652">8100</text><text x="416" y="674">750</text>
    </g>
    ${seg(green, "307,640 353,637")}${seg(green, "372,660 418,657")}${seg(green, "372,654 408,666")}
    ${seg("#c8c8c8", "356,645 358,651 362,642")}

    <g shape-rendering="auto">
      <path d="M225 628L232 590" stroke="#0a7ef0" stroke-width="3.500"/><path d="M233 583l3.500 11h-7.500z" fill="#0a7ef0"/>
      <path d="M225 628L236 612" stroke="#18e020" stroke-width="3"/><path d="M238 609l-1 7-5-3z" fill="#18e020"/>
      <path d="M225 628L262 639" stroke="#ff1010" stroke-width="3.500"/><path d="M272 642l-12 2 2-7z" fill="#ff1010"/>
      <path d="M223 576h7l-7 8h8" fill="none" stroke="#0a7ef0"/>
      <path d="M246 612l3 4 3-4M249 616v4" fill="none" stroke="#18e020"/>
      <path d="M265 629l8 7M273 629l-8 7" fill="none" stroke="#ff1010"/>
    </g>
  </svg>`;
});

define("gld-taskbar", () => `
  <style>
    :host { display: flex; align-items: center; flex: none; height: 40px; background: #03121a; color: #fff; position: relative; }
    svg { display: block; flex: none; }
    .start { width: 48px; display: flex; justify-content: center; }
    .search { display: flex; align-items: center; width: 344px; height: 40px; background: #353535; box-sizing: border-box; padding-left: 9px; color: #8d99a3; font-size: 14px; }
    .search .ph { margin-left: 7px; white-space: nowrap; }
    .search .mic { margin-left: auto; margin-right: 14px; }
    .apps { display: flex; align-items: center; height: 40px; }
    .app { display: flex; align-items: center; justify-content: center; width: 49px; height: 40px; box-sizing: border-box; flex: none; }
    .app.active { background: #3a4448; box-shadow: inset 0 -2px #76b9ed; }
    .app.run { width: 40px; margin: 0 4.5px; box-shadow: inset 0 -2px #76b9ed; }
    .tray { margin-left: auto; display: flex; align-items: center; height: 40px; }
    .cpu { text-align: center; font-size: 12.500px; line-height: 17px; width: 64px; padding-top: 1px; }
    .clock { text-align: center; font-size: 12px; line-height: 18px; width: 60px; margin-left: 27px; margin-right: 9px; }
    .note { position: relative; margin-right: 26px; }
    .badge { position: absolute; right: -9px; bottom: -5px; width: 16px; height: 16px; border-radius: 50%; background: #4a4f52; font-size: 11px; font-weight: 700; line-height: 16px; text-align: center; }
  </style>
  <div class="start"><svg width="17" height="17" viewBox="0 0 17 17" fill="#fff"><path d="M0 2.500l7-1v6.500H0zM8 1.300L17 0v8H8zM0 9h7v6.500l-7-1zM8 9h9v8l-9-1.300z"/></svg></div>
  <div class="search">
    <svg width="20" height="20" viewBox="0 0 20 20" fill="none" stroke="#e6e6e6" stroke-width="2.400"><circle cx="10" cy="10" r="8.500"/></svg>
    <span class="ph">在这里输入你要搜索的内容</span>
    <svg class="mic" width="12" height="16" viewBox="0 0 12 16" fill="none" stroke="#8c8c8c"><rect x="3.500" y=".5" width="5" height="9" rx="2.500"/><path d="M1 7c0 6 10 6 10 0M6 12v3M3 15.500h6"/></svg>
  </div>
  <div class="apps">
    <div class="app" style="margin-left:1px"><svg width="22" height="22" viewBox="0 0 22 22" fill="#eaeaea"><path d="M10 10C5 11 1 9 1 5c1-4 7-5 9-1 1 2 1 4 0 6zM12 10c-1-5 1-9 5-9 4 1 5 7 1 9-2 1-4 1-6 0zM12 12c5-1 9 1 9 5-1 4-7 5-9 1-1-2-1-4 0-6zM10 12c1 5-1 9-5 9-4-1-5-7-1-9 2-1 4-1 6 0z"/></svg></div>
    <div class="app" style="width:47px"><svg width="19" height="19" viewBox="0 0 19 19" fill="none" stroke="#cfcfcf" stroke-width="1.300"><path d="M15 3C9-1 2 3 2 9.500c0 6 8 9 13 5 2-2 2-5 0-6.500-3-2-7-1-7 2 0 2 3 3 4 1"/></svg></div>
    <div style="width:4px;height:17px;border-left:1px solid #555;border-right:1px solid #555;margin:0 8px 0 15px;box-sizing:border-box;flex:none"></div>
    <div class="app"><svg width="21" height="22" viewBox="0 0 21 22"><path d="M1 11C1 4 6 1 11 1c5 0 9 3 9 11H7c0 4 8 5 12 2v5c-6 3-18 2-18-8zm6-2h7c0-4-7-4-7 0z" fill="#0f78d4"/></svg></div>
    <div class="app"><svg width="20" height="24" viewBox="0 0 20 24"><path d="M1 6l18-2v19L1 20z" fill="#f4f4f4"/><path d="M6 6c0-6 8-6 8-1" fill="none" stroke="#f4f4f4" stroke-width="1.300"/><path d="M5 10h4v4H5zM10 10h4v4h-4zM5 15h4v4H5zM10 15h4v4h-4z" fill="#111"/></svg></div>
    <div class="app"><svg width="22" height="20" viewBox="0 0 22 20"><path d="M0 1h8l2 2h12v17H0z" fill="#f8d775"/><path d="M0 5h22v2H0z" fill="#e9bf4f"/><path d="M7 12h8v8H7z" fill="#3aa3dd"/><path d="M4 16l7-6 7 6v1H4z" fill="#5bbfee"/><path d="M9 16h4v4H9z" fill="#f8d775"/></svg></div>
    <div class="app active"><svg width="24" height="24" viewBox="0 0 24 24"><rect width="24" height="24" rx="4" fill="#0b93f0"/><path d="M12 5c2 0 2 3 0 5 3-1 7-1 7 2s-4 3-7 1c2 2 2 6 0 6s-2-4 0-6c-3 2-7 2-7-1s4-3 7-2c-2-2-2-5 0-5z" fill="none" stroke="#fff" stroke-width="1.800"/></svg></div>
    <div class="app run"><svg width="24" height="26" viewBox="0 0 24 26"><path d="M23 3C14-2 1 3 1 14c0 8 8 12 14 10 5-2 8-7 6-11-3-4-9-3-9 1 0 2 3 4 5 2-3 5-11 3-10-3C8 7 16 3 23 3z" fill="#1d86e6"/></svg></div>
    <div class="app run"><svg width="22" height="24" viewBox="0 0 22 24"><circle cx="11" cy="12" r="10" fill="#79c83c" stroke="#ddd" stroke-width="1.500"/><path d="M7 12h8c-.5-4-7-4-7.500 0-.5 4 6 5 8 2.500" fill="none" stroke="#fff" stroke-width="1.800"/></svg></div>
  </div>
  <div class="tray">
    <div class="cpu">29%<br>CPU使用</div>
    <svg style="margin-left:12px" width="13" height="8" viewBox="0 0 13 8" fill="none" stroke="#fff" stroke-width="1.200"><path d="M.5 7.500l6-6 6 6"/></svg>
    <svg style="margin-left:8px" width="16" height="11" viewBox="0 0 16 11"><path d="M0 3h2V0h1v3h2v3H3v3H2V6H0zM5 2h10v7H5z" fill="none" stroke="#fff"/><path d="M7 3.500h7v4H7z" fill="#fff"/></svg>
    <svg style="margin-left:9px" width="14" height="13" viewBox="0 0 14 13" fill="none" stroke="#bbb"><path d="M1 12C1 6 6 1 13 1M4 12c0-4 4-8 9-8M7 12c0-2 3-5 6-5"/><circle cx="11" cy="11" r="1.500" fill="#fff" stroke="none"/></svg>
    <svg style="margin-left:8px" width="15" height="13" viewBox="0 0 15 13" fill="none" stroke="#ccc"><path d="M.5 4.500h3l4-4v12l-4-4h-3zM10 3c2 2 2 5 0 7M12 1c3 3 3 8 0 11"/></svg>
    <span style="margin-left:10px;font-weight:700;font-size:14px;width:14px">中</span>
    <svg style="margin-left:15px" width="14" height="15" viewBox="0 0 14 15"><path d="M1 2l11-2 2 12-11 3-2-3z" fill="#e8481f"/><path d="M10 4H5C3 4 3 7 5 7h3c3 0 3 4 0 4H4" fill="none" stroke="#fff" stroke-width="1.800"/></svg>
    <div class="clock">19:13<br>2017/6/8</div>
    <div class="note">
      <svg width="16" height="14" viewBox="0 0 16 14"><path d="M0 0h16v10H6l-3 3v-3H0z" fill="#fff"/><path d="M2 3h12M2 5.500h12M2 8h9" stroke="#333" stroke-width=".8"/></svg>
      <span class="badge">5</span>
    </div>
  </div>`);

define("gld-sogou", () => `
  <style>
    :host { display: flex; align-items: center; position: absolute; left: 915px; top: 0; height: 27px; }
    .bar { display: flex; align-items: center; box-sizing: border-box; width: 156px; height: 23px; margin-top: 3px; background: #f2f7fc; border: 1px solid #a9c5dc; border-left: 0; color: #1678d0; }
    svg { display: block; flex: none; }
    .zh { font-weight: 700; font-size: 14px; margin-left: 6px; margin-right: 10px; width: 14px; line-height: 16px; }
  </style>
  <svg width="28" height="27" viewBox="0 0 28 27"><path d="M2 6L24 0l4 20-21 7-5-5z" fill="#e8481f"/><path d="M20 7h-9c-4 0-4 6 0 6h5c4 0 4 6 0 6H8" fill="none" stroke="#fff" stroke-width="3"/></svg>
  <div class="bar">
    <span class="zh">中</span>
    <svg width="12" height="12" viewBox="0 0 12 12" fill="#1678d0" style="margin-right:10px"><circle cx="2" cy="3" r="1.500" fill="none" stroke="#1678d0"/><path d="M8 4c2 0 3 2 1 6l-1-1c1-1 1-2 0-2z"/></svg>
    <svg width="12" height="17" viewBox="0 0 12 17" fill="#1678d0" style="margin-right:8px"><rect x="3" y="0" width="6" height="11" rx="3"/><path d="M1 7c0 6 10 6 10 0M6 12v4M2 16h8" fill="none" stroke="#1678d0"/></svg>
    <svg width="17" height="12" viewBox="0 0 17 12" style="margin-right:7px"><rect width="17" height="12" rx="2" fill="#1678d0"/><path d="M3 4h11M3 6.500h11M5 9h7" stroke="#fff" stroke-dasharray="1.500 1"/></svg>
    <svg width="15" height="15" viewBox="0 0 15 15" fill="#b7c4cf" style="margin-right:6px"><circle cx="6" cy="3.500" r="3"/><path d="M1 13c0-5 2-6 5-6 2 0 3 1 4 2v5H1z"/><rect x="8" y="9" width="7" height="6" fill="#d4dee6"/></svg>
    <svg width="15" height="13" viewBox="0 0 15 13" fill="#1678d0" style="margin-right:7px"><path d="M4 0L0 3l2 3 2-1v8h7V5l2 1 2-3-4-3c-1 2-5 2-6 0z"/></svg>
    <svg width="14" height="14" viewBox="0 0 14 14" fill="#1678d0"><path d="M9 0c3-1 5 1 5 4l-2.500 1L9 3zM8 4l2 2-7 8c-3 1-4-1-3-3z"/></svg>
  </div>`);

define("gld-score", () => `
  <style>
    :host { display: flex; align-items: flex-end; justify-content: center; position: absolute; left: 1108px; top: -27px; width: 47px; height: 47px; box-sizing: border-box; padding-bottom: 4px; border-radius: 50%; background: #35b549; border: 2px solid #b6c7b9; box-shadow: 0 1px 2px rgba(0,0,0,.35); color: #fff; font: 700 12px/12px "Noto Sans", sans-serif; }
  </style><slot></slot>`);
</script>
</body>
</html>
